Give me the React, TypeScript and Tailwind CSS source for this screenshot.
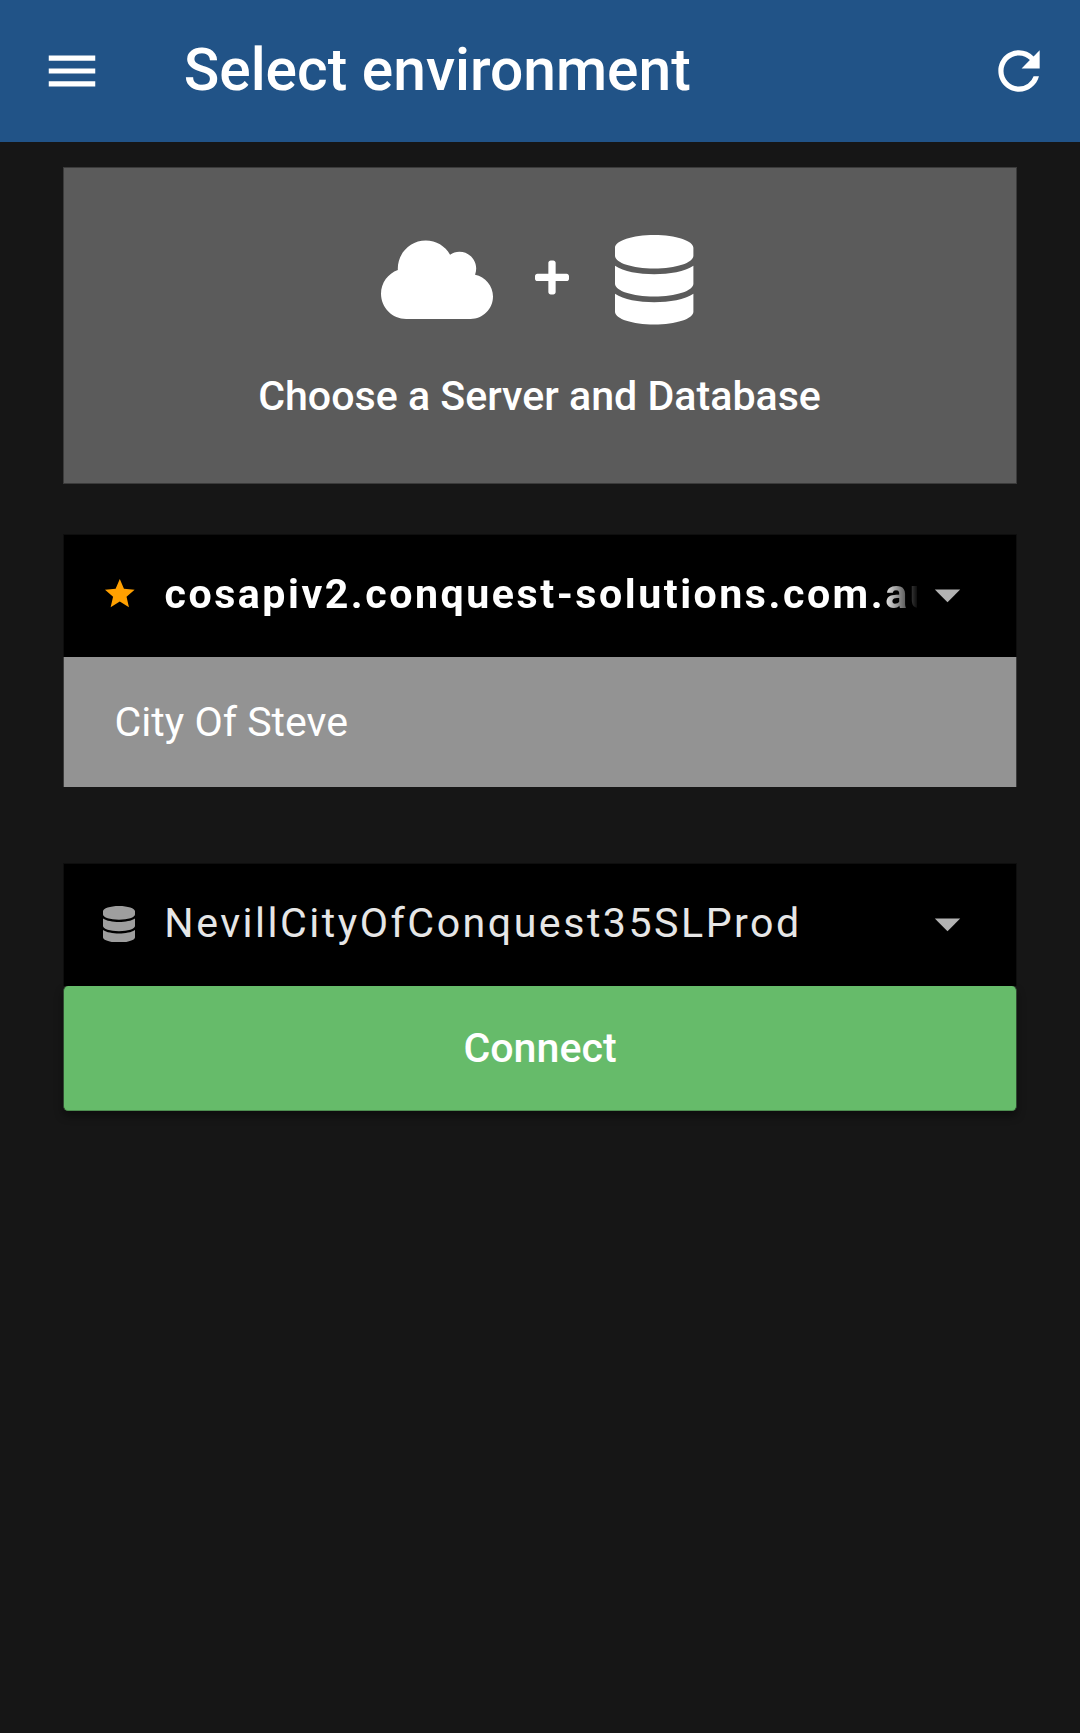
import type { ReactNode } from 'react';
import { FaCloud, FaDatabase, FaPlus } from 'react-icons/fa';
import { MdArrowDropDown, MdMenu, MdRefresh, MdStar } from 'react-icons/md';

function SelectRow({ icon, children }: { icon: ReactNode; children: ReactNode }) {
  return (
    <button className="flex h-[123px] w-full items-center border-x border-t border-[#0e0e0e] bg-black pb-[4px] text-left">
      <span className="flex w-[100px] shrink-0 items-center">{icon}</span>
      {children}
      <MdArrowDropDown className="size-[61px] shrink-0 text-[#b3b3b3]" />
    </button>
  );
}

export default function App() {
  return (
    <div className="flex min-h-[1733px] w-full flex-col bg-[#161616] font-['Roboto',sans-serif] text-[41.14px] leading-[48px] text-white">
      <header className="flex h-[142px] items-center bg-[#215387] pr-[30.4px] pl-[41px]">
        <MdMenu className="mb-px size-[62px] shrink-0" />
        <h1 className="ml-[80.7px] flex-1 pb-[2px] text-[58.7px] leading-[70px] font-medium whitespace-nowrap">
          Select environment
        </h1>
        <MdRefresh className="mb-px size-[62px] shrink-0" />
      </header>

      <main className="px-[63px] pt-[25px]">
        <section className="h-[317px] border border-[#3b3b3b] bg-[#5b5b5b] pt-[67px]">
          <div className="flex h-[89.6px] items-center justify-center pr-[5.9px]">
            <FaCloud className="h-[89.6px] w-[112px]" />
            <FaPlus className="mb-[4px] ml-[42.5px] h-[38.9px] w-[34px]" />
            <FaDatabase className="ml-[46px] h-[89.6px] w-[78.4px]" />
          </div>
          <h2 className="mt-[47.4px] pr-[1px] text-center font-medium">Choose a Server and Database</h2>
        </section>

        <div className="mt-[50px]">
          <SelectRow icon={<MdStar className="ml-[38px] size-[35.6px] text-[#ffa000]" />}>
            <span className="w-[753px] shrink-0 overflow-hidden pl-[0.5px] font-bold tracking-[2.52px] whitespace-nowrap [mask-image:linear-gradient(to_right,#000_718px,transparent_755px)]">
              cosapiv2.conquest-solutions.com.au
            </span>
          </SelectRow>
          <div className="flex h-[130px] items-center border-x border-[#3b3b3b] bg-[#939393] pl-[50.5px]">
            City Of Steve
          </div>
        </div>

        <div className="mt-[76px]">
          <SelectRow icon={<FaDatabase className="mt-[2px] ml-[39px] h-[36.6px] w-[32px] text-[#9e9e9e]" />}>
            <span className="w-[753px] shrink-0 overflow-hidden pl-[0.3px] tracking-[2.5px] whitespace-nowrap text-[#e6e6e6]">
              NevillCityOfConquest35SLProd
            </span>
          </SelectRow>
          <button className="block h-[125px] w-full rounded-[5px] border-x border-b border-x-[#2f4a30] border-b-[#4e8e51] bg-[#66bb6a] text-center font-medium shadow-[0_5px_9px_rgba(0,0,0,0.4)]">
            Connect
          </button>
        </div>
      </main>
    </div>
  );
}
